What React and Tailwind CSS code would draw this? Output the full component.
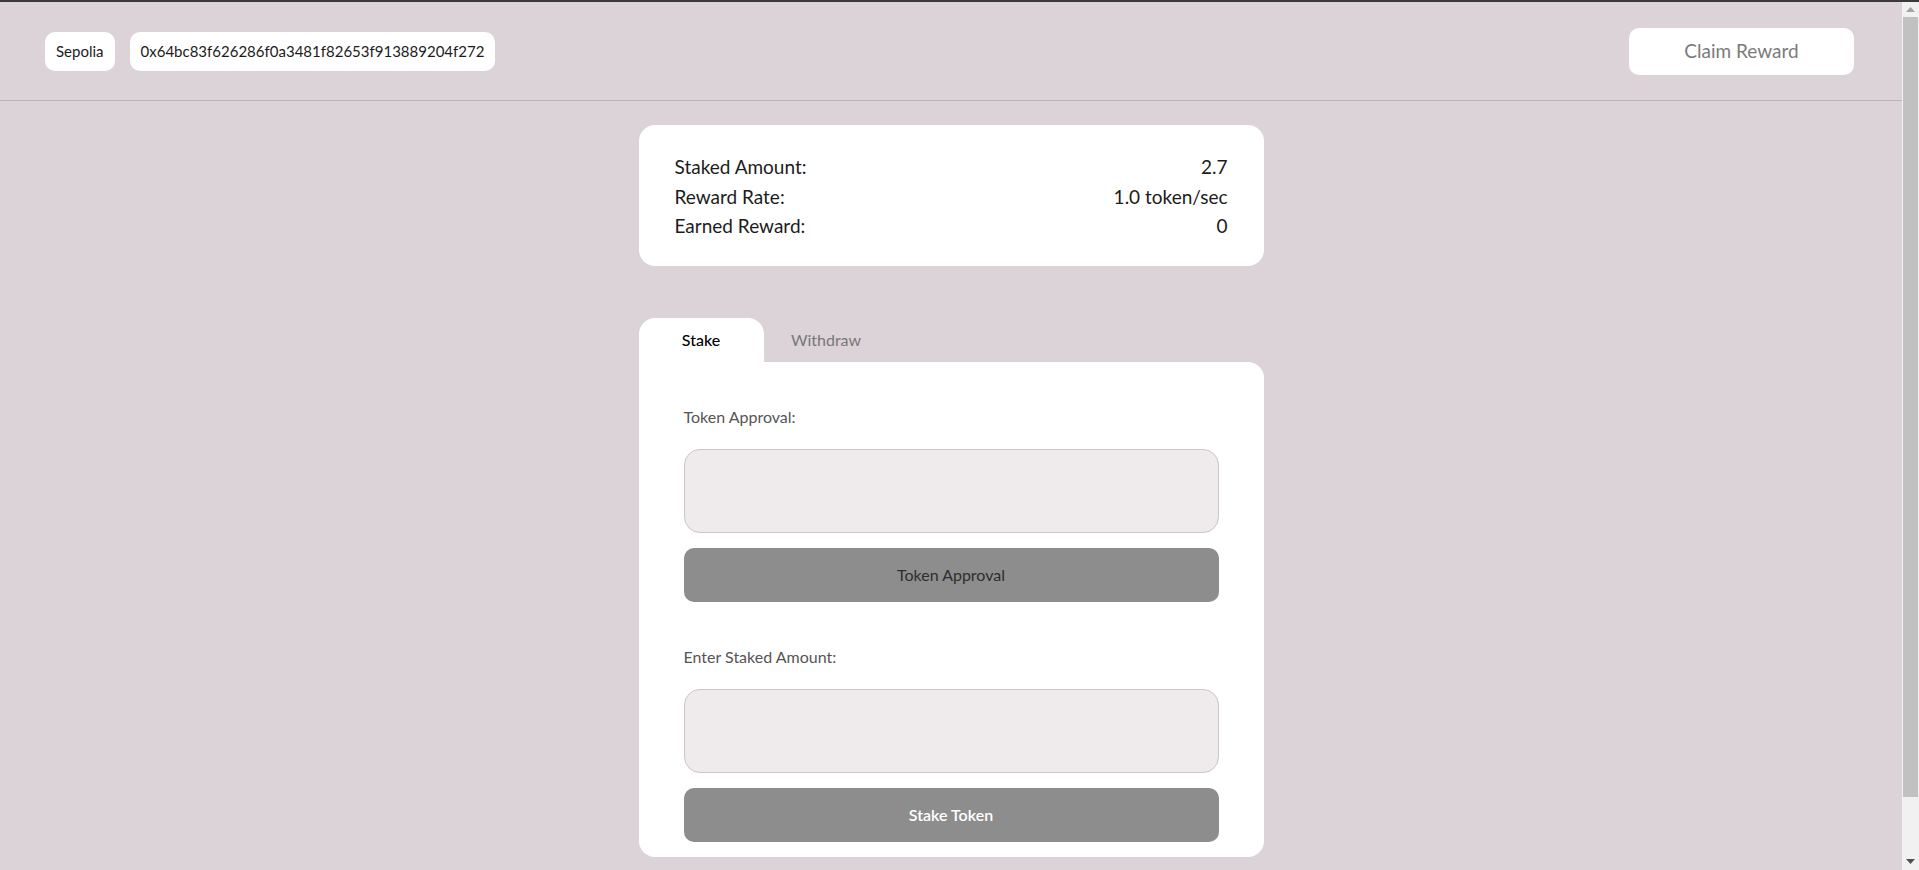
import React, { useState } from "react";

const stats = [
    { label: "Staked Amount:", value: "2.7" },
    { label: "Reward Rate:", value: "1.0 token/sec" },
    { label: "Earned Reward:", value: "0" },
];

function Field({ label, button, buttonText }) {
    return (
        <div className="pt-[43px]">
            <p className="text-[16px] leading-[24px] text-[#555555]">{label}</p>
            <input
                type="text"
                className="mt-[20px] block w-full h-[84px] rounded-2xl border border-[#cbc7c9] bg-[#efebec] outline-none px-4"
            />
            <button
                className={`mt-[15px] w-full h-[54px] rounded-[10px] bg-[#8c8d8c] text-[16px] ${buttonText}`}
            >
                {button}
            </button>
        </div>
    );
}

function Scrollbar() {
    return (
        <div className="w-[17px] shrink-0 bg-[#f1f1f1] flex flex-col items-center">
            <svg width="9" height="5" viewBox="0 0 9 5" className="mt-[5px]">
                <path d="M0 5 L4.5 0 L9 5 Z" fill="#a3a3a3" />
            </svg>
            <div className="mt-[5px] w-[15px] h-[780px] bg-[#c1c1c1]" />
            <div className="flex-1" />
            <svg width="9" height="5" viewBox="0 0 9 5" className="mb-[6px]">
                <path d="M0 0 L9 0 L4.5 5 Z" fill="#505050" />
            </svg>
        </div>
    );
}

export default function App() {
    const [tab, setTab] = useState("stake");

    return (
        <div className="h-screen flex flex-col overflow-hidden bg-[#dcd3d8] font-['Lato',sans-serif] text-[#1c1c1c]">
            <div className="h-[2px] shrink-0 bg-[#3a3a3a]" />
            <div className="flex-1 flex min-h-0">
                <div className="flex-1 min-w-0 overflow-hidden">
                    <header className="h-[99px] border-b border-[#b9b3b7] flex items-center justify-between pl-[45px] pr-[48px]">
                        <div className="flex items-center gap-[15px]">
                            <div className="h-[39px] px-[11px] flex items-center bg-white rounded-[10px] text-[15px]">
                                Sepolia
                            </div>
                            <div className="h-[39px] px-[11px] flex items-center bg-white rounded-[10px] text-[15px]">
                                0x64bc83f626286f0a3481f82653f913889204f272
                            </div>
                        </div>
                        <button className="w-[225px] h-[47px] bg-white rounded-[10px] text-[19px] text-[#7b7b7b]">
                            Claim Reward
                        </button>
                    </header>

                    <main className="flex flex-col items-center pt-[24px] pb-[60px]">
                        <div className="w-[625px] bg-white rounded-2xl px-[36px] pt-[27px] pb-[25px]">
                            {stats.map((s) => (
                                <div key={s.label} className="flex justify-between text-[19px] leading-[29.5px]">
                                    <span>{s.label}</span>
                                    <span>{s.value}</span>
                                </div>
                            ))}
                        </div>

                        <div className="w-[625px] mt-[52px]">
                            <div className="flex">
                                <button
                                    onClick={() => setTab("stake")}
                                    className={`w-[125px] h-[44px] rounded-t-2xl text-[16px] ${tab === "stake" ? "bg-white text-black font-medium" : "text-[#777777]"}`}
                                >
                                    Stake
                                </button>
                                <button
                                    onClick={() => setTab("withdraw")}
                                    className={`w-[125px] h-[44px] rounded-t-2xl text-[16px] ${tab === "withdraw" ? "bg-white text-black font-medium" : "text-[#777777]"}`}
                                >
                                    Withdraw
                                </button>
                            </div>
                            <div className="bg-white rounded-b-2xl rounded-tr-2xl px-[45px] pb-[15px]">
                                {tab === "stake" ? (
                                    <>
                                        <Field label="Token Approval:" button="Token Approval" buttonText="text-[#2e2e2e]" />
                                        <Field label="Enter Staked Amount:" button="Stake Token" buttonText="text-white font-semibold" />
                                    </>
                                ) : (
                                    <Field label="Enter Withdraw Amount:" button="Withdraw Token" buttonText="text-white font-semibold" />
                                )}
                            </div>
                        </div>
                    </main>
                </div>
                <Scrollbar />
            </div>
        </div>
    );
}
